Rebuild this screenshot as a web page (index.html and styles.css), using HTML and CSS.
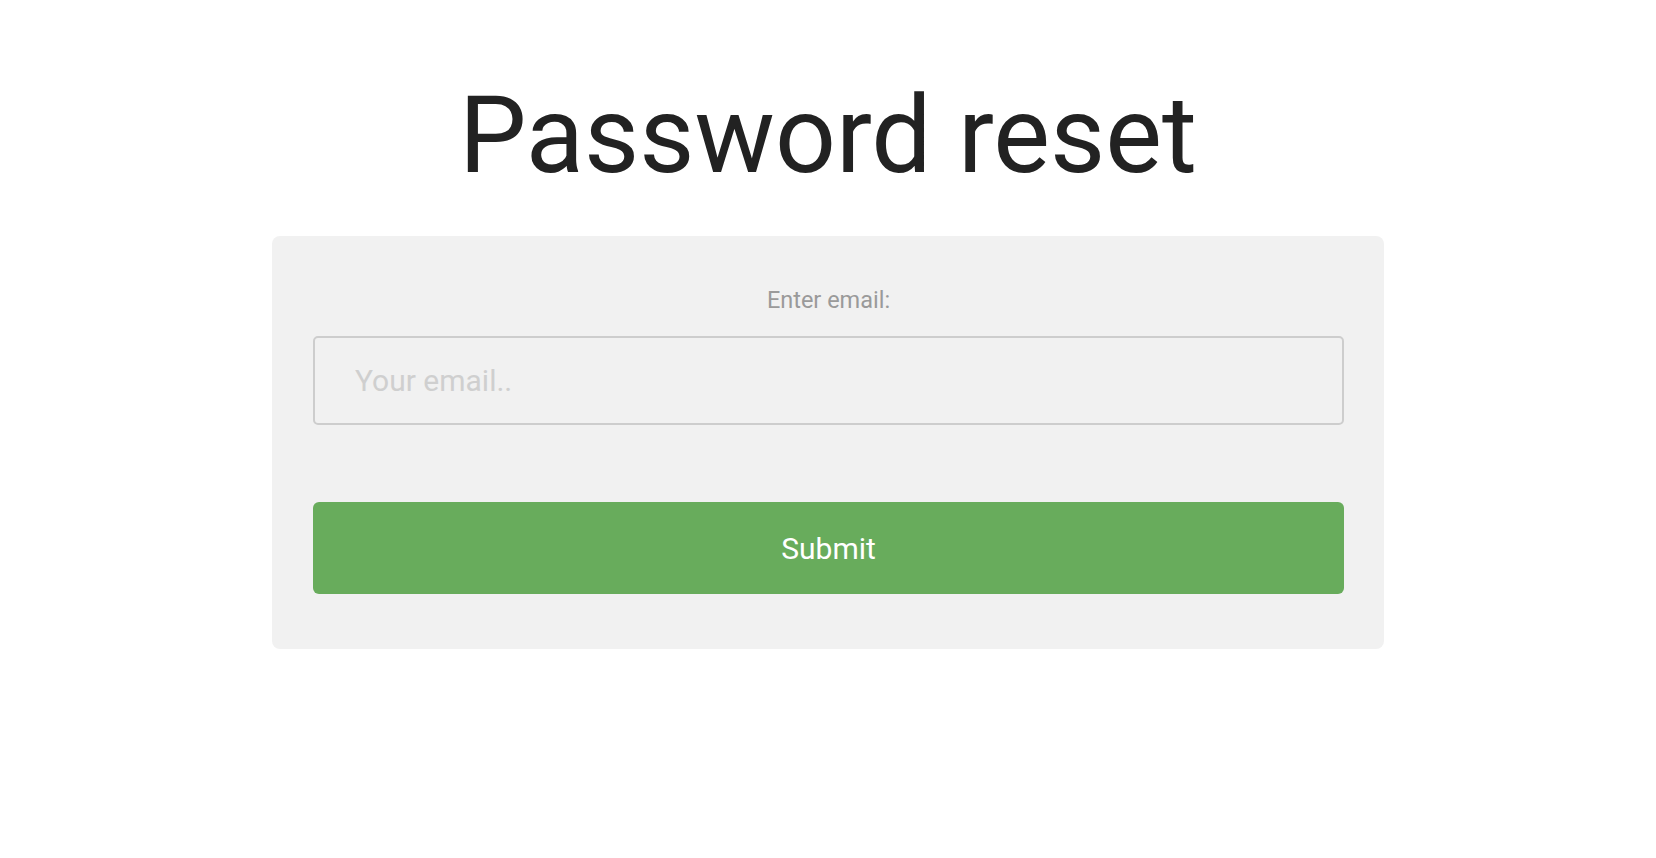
FILE: index.html
```html
<!DOCTYPE html>
<html lang="en">
<head>
    <meta charset="UTF-8">
    <meta name="viewport" content="width=device-width, initial-scale=1.0">
    <title>Password reset</title>
    <link rel="stylesheet" href="styles.css">
</head>
<body>
    <div class="page">
        <h1>Password reset</h1>

        <form class="card" onsubmit="return false;">
            <label for="email">Enter email:</label>
            <input type="email" id="email" name="email" placeholder="Your email..">
            <button type="submit">Submit</button>
        </form>
    </div>
</body>
</html>
```

FILE: styles.css
```css
body {
    margin: 0;
    font-family: Roboto, "Liberation Sans", sans-serif;
    background: #fff;
}
.page {
    display: flex;
    flex-direction: column;
    align-items: center;
    padding-top: 71px;
}
h1 {
    margin: 0;
    font-size: 107px;
    font-weight: 400;
    line-height: 130px;
    color: #222;
}
.card {
    box-sizing: border-box;
    width: 1112px;
    margin-top: 35px;
    padding: 50px 40px 55px 41px;
    background: #f1f1f1;
    border-radius: 8px;
    display: flex;
    flex-direction: column;
}
label {
    text-align: center;
    font-size: 23.5px;
    color: #9a9a9a;
}
input {
    box-sizing: border-box;
    height: 89px;
    margin-top: 22px;
    padding: 0 40px;
    font-family: inherit;
    font-size: 30px;
    color: #333;
    background: transparent;
    border: 2px solid #cdcdcd;
    border-radius: 5px;
    outline: none;
}
input::placeholder {
    color: #cfcfcf;
}
button {
    height: 92px;
    margin-top: 77px;
    background: #68ac5c;
    color: white;
    border: none;
    border-radius: 6px;
    font-family: inherit;
    font-size: 30px;
    cursor: pointer;
}
button:hover {
    background: #5f9f54;
}
```
